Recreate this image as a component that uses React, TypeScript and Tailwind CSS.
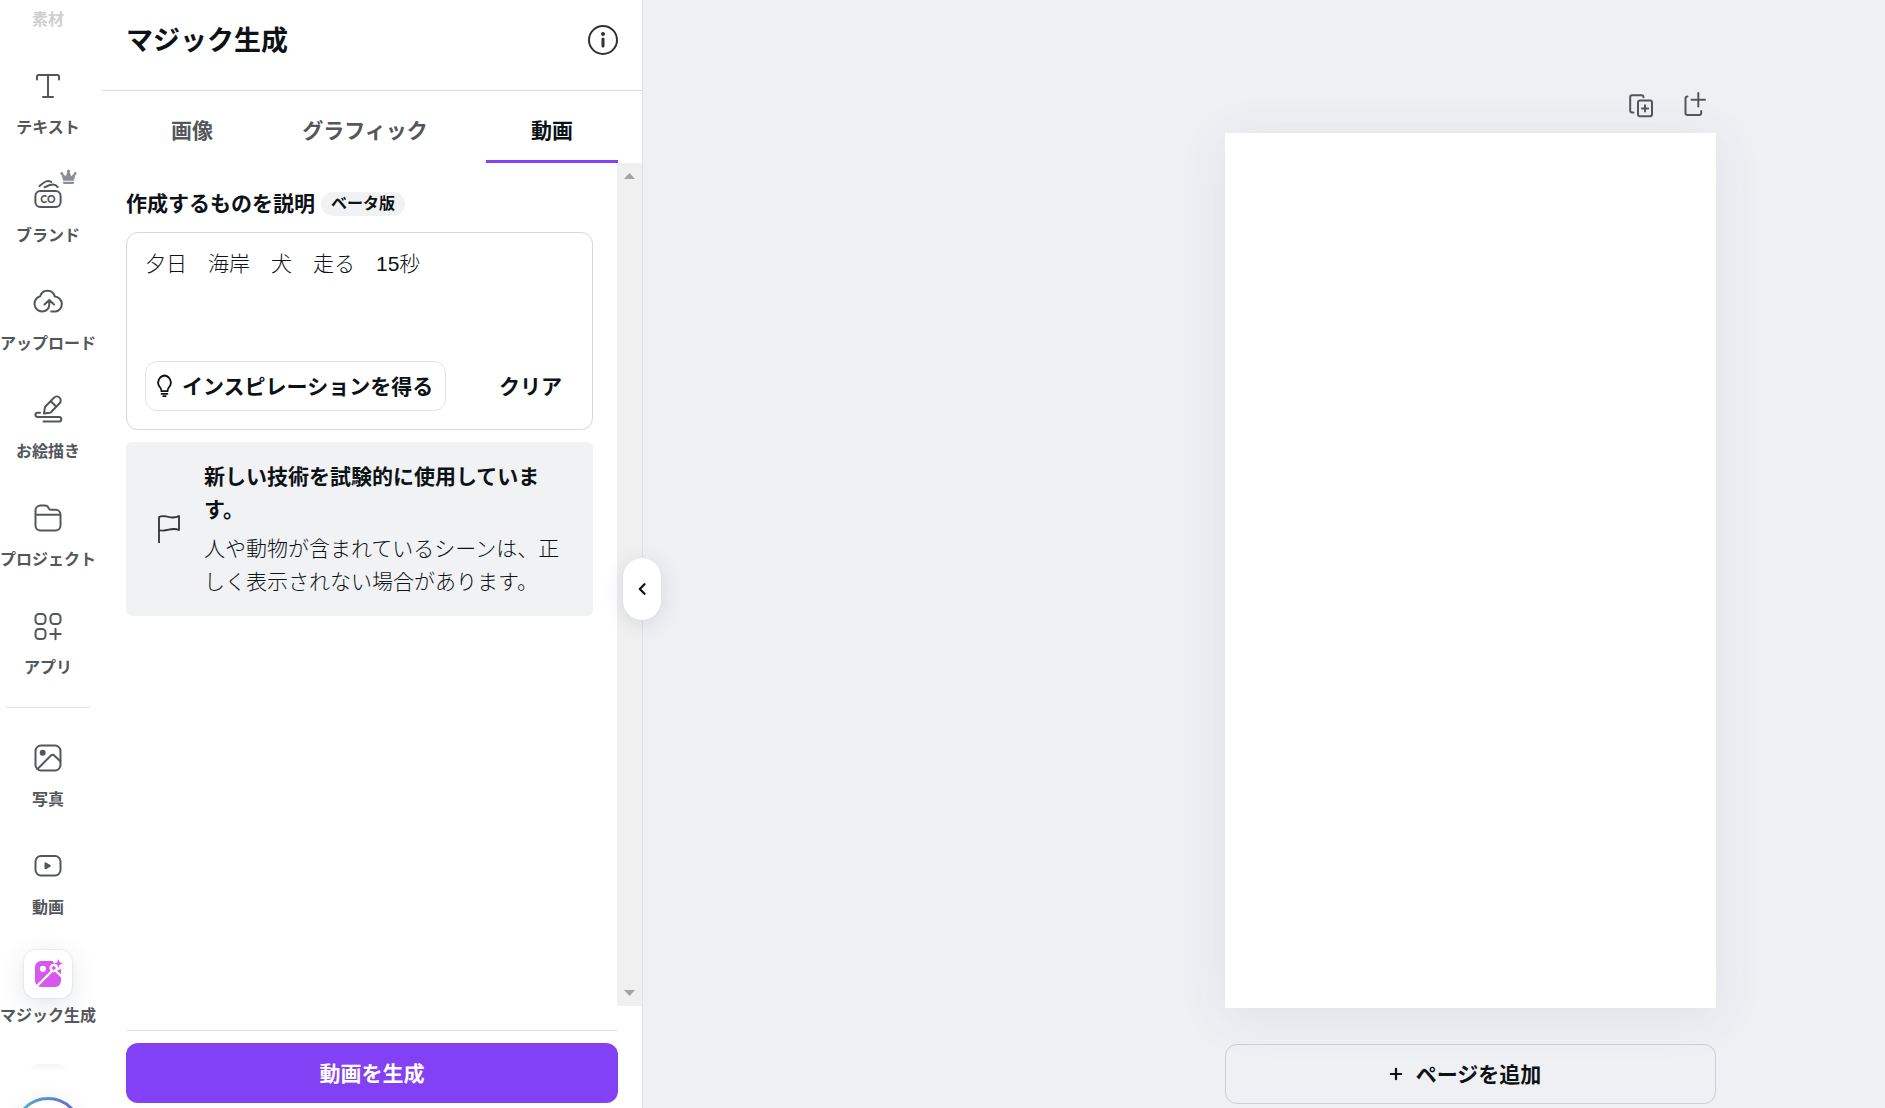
import { useState } from "react";
import type { ReactNode } from "react";

interface NavItem {
  label: string;
  icon: ReactNode;
  premium?: boolean;
  active?: boolean;
}

function Icon({ children }: { children: ReactNode }) {
  return (
    <svg
      className="h-9 w-9"
      viewBox="0 0 36 36"
      fill="none"
      stroke="currentColor"
      strokeWidth="2"
      strokeLinecap="round"
      strokeLinejoin="round"
      aria-hidden="true"
    >
      {children}
    </svg>
  );
}

const mainItems: NavItem[] = [
  {
    label: "テキスト",
    icon: (
      <Icon>
        <path d="M7 11.5V8.500a1.500 1.500 0 0 1 1.500-1.500h19A1.500 1.500 0 0 1 29 8.500v3M18 7v22M13 29h10" />
      </Icon>
    ),
  },
  {
    label: "ブランド",
    premium: true,
    icon: (
      <Icon>
        <rect x="5.400" y="15" width="25.200" height="16" rx="5" />
        <path d="M9.500 10c3-2.600 5.300-4.200 7.500-4.900 1.500-.4 2.800 0 4.200.9M14.500 11.300c3.500-2 6-2.900 8.500-2.900 1.700 0 3.200.8 4.700 2.600" />
        <text x="18" y="26.800" textAnchor="middle" fontSize="10.500" fontWeight="900" fontFamily="Lato, sans-serif" fill="currentColor" stroke="none">CO</text>
      </Icon>
    ),
  },
  {
    label: "アップロード",
    icon: (
      <Icon>
        <path d="M19.300 17v3.500c0 4-3 7-7.300 7a7.800 7.800 0 0 1-1.800-15.300A7.500 7.500 0 0 1 24.700 12.600 7.500 7.500 0 0 1 25.500 27.500h-4.300M14.500 20.500l4.800-4.500 4.800 4.500" />
      </Icon>
    ),
  },
  {
    label: "お絵描き",
    icon: (
      <Icon>
        <path d="M14 21.500l.9-5.900c.1-.5.4-1 .7-1.300L24 5.700a3.900 3.900 0 0 1 5.600 5.500L21.200 20c-.4.400-.8.600-1.300.700zM20.800 9.200l5.500 5.500" />
        <path d="M10 20.700H7.500a2.100 2.100 0 0 0 0 4.200H29a2.200 2.200 0 0 1 0 4.600H13.500" />
      </Icon>
    ),
  },
  {
    label: "プロジェクト",
    icon: (
      <Icon>
        <path d="M5.500 10.500a5 5 0 0 1 5-5h4.500c1.500 0 2.500.6 3.200 1.800l.6 1.100c.6 1 1.300 1.400 2.500 1.400h4.200a5 5 0 0 1 5 5v10.700a5 5 0 0 1-5 5h-15a5 5 0 0 1-5-5zM5.500 14.800h25" />
      </Icon>
    ),
  },
  {
    label: "アプリ",
    icon: (
      <Icon>
        <rect x="5.500" y="6" width="10" height="10" rx="3.500" />
        <rect x="20.500" y="6" width="10" height="10" rx="3.500" />
        <rect x="5.500" y="21" width="10" height="10" rx="3.500" />
        <path d="M25.500 20.800v10.400M20.300 26h10.400" />
      </Icon>
    ),
  },
];

const pinnedItems: NavItem[] = [
  {
    label: "写真",
    icon: (
      <Icon>
        <rect x="5.500" y="5.500" width="25" height="25" rx="5.500" />
        <circle cx="12.700" cy="12.700" r="3" fill="currentColor" stroke="none" />
        <path d="M7.500 29l13.200-13.300c1.300-1.300 2.500-1.300 3.800 0l5.800 5.500" />
      </Icon>
    ),
  },
  {
    label: "動画",
    icon: (
      <Icon>
        <rect x="5.500" y="8" width="25" height="19.500" rx="5.500" />
        <path d="M15.500 15.300v5l4.300-2.500z" fill="currentColor" />
      </Icon>
    ),
  },
  {
    label: "マジック生成",
    active: true,
    icon: (
      <svg className="h-9 w-9" viewBox="0 0 36 36" aria-hidden="true">
        <rect x="5" y="5" width="26" height="26" rx="6" fill="#d857ef" />
        <circle cx="12.900" cy="12.800" r="3.100" fill="#fff" />
        <path d="M6.500 30.500L23 14M24 13l8 8" stroke="#fff" strokeWidth="2.400" fill="none" />
        <path d="M22 3h11v11h-6z" fill="#fff" />
        <circle cx="23.800" cy="12" r="4.300" fill="#fff" />
        <path d="M23.800 9.300l1 1.700 1.800 1-1.800 1-1 1.700-1-1.700-1.800-1 1.800-1z" fill="#d857ef" />
        <path d="M28.500 3l1.200 3.200 3.200 1.300-3.200 1.200-1.200 3.300-1.200-3.300-3.200-1.200 3.200-1.300z" fill="#d857ef" />
        <path d="M31 12.500v5.300l-3.200-3z" fill="#d857ef" />
      </svg>
    ),
  },
];

function CrownIcon() {
  return (
    <svg className="h-4 w-[17px]" viewBox="0 0 17 16" fill="#8b8f95" aria-hidden="true">
      <circle cx="1.700" cy="4.400" r="1.400" />
      <circle cx="8.500" cy="2" r="1.600" />
      <circle cx="15.300" cy="4.400" r="1.400" />
      <path d="M3.200 11.700L1.200 4.600l1.400-.3 3.200 3L7.600 2.500h1.800l1.800 4.800 3.200-3 1.400.3-2 7.100z" />
      <rect x="3" y="12.700" width="11" height="2.200" rx=".8" />
    </svg>
  );
}

function SideNavButton({ item }: { item: NavItem }) {
  return (
    <button className="flex h-[108px] w-24 shrink-0 flex-col items-center gap-[6px] pt-3 text-[#53575c]">
      <span
        className={
          item.active
            ? "relative flex h-12 w-12 items-center justify-center rounded-xl bg-white shadow-[0_0_1px_1px_rgba(64,87,109,0.08),0_6px_24px_rgba(64,79,109,0.15)]"
            : "relative flex h-12 w-12 items-center justify-center"
        }
      >
        {item.icon}
        {item.premium && (
          <span className="absolute -top-px -right-[5px]">
            <CrownIcon />
          </span>
        )}
      </span>
      <span className="relative text-base leading-6 font-semibold whitespace-nowrap">{item.label}</span>
    </button>
  );
}

function SideNav() {
  return (
    <nav className="flex h-full w-[102px] shrink-0 flex-col overflow-hidden bg-white">
      <button className="flex h-[50px] w-24 shrink-0 items-start justify-center pt-2 text-base leading-6 font-semibold text-[#cfd0d2]">
        素材
      </button>
      {mainItems.map((item) => (
        <SideNavButton key={item.label} item={item} />
      ))}
      <div className="h-6 w-24 shrink-0 px-[6px] pt-[9px]">
        <div className="h-px bg-[#dddfe2]" />
      </div>
      {pinnedItems.map((item) => (
        <SideNavButton key={item.label} item={item} />
      ))}
      <div className="mt-[18px] ml-[30px] h-2 w-9 shrink-0 rounded-t-md bg-linear-to-b from-[#f5f5f6] to-white" />
      <button aria-label="アシスタント" className="mt-[25px] ml-[14px] h-[68px] w-[68px] shrink-0 rounded-full shadow-[0_2px_16px_rgba(64,79,109,0.12)]">
        <svg viewBox="0 0 68 68" fill="none" aria-hidden="true">
          <defs>
            <linearGradient id="ring" x1="8" y1="0" x2="60" y2="0" gradientUnits="userSpaceOnUse">
              <stop stopColor="#50b0c8" />
              <stop offset="1" stopColor="#6a67d2" />
            </linearGradient>
          </defs>
          <circle cx="34" cy="34" r="32.500" fill="#fff" stroke="url(#ring)" strokeWidth="3" />
        </svg>
      </button>
    </nav>
  );
}

const tabs = [
  { id: "image", label: "画像", className: "w-[132px]" },
  { id: "graphic", label: "グラフィック", className: "w-[214px]" },
  { id: "video", label: "動画", className: "ml-auto w-[132px]" },
];

function Scrollbar() {
  return (
    <div className="flex w-[25px] shrink-0 flex-col items-center justify-between bg-[#f0f0f0] py-[10px]">
      <svg className="h-[6px] w-[11px]" viewBox="0 0 11 6" fill="#a3a3a3" aria-hidden="true">
        <path d="M0 6L5.500 0 11 6z" />
      </svg>
      <svg className="h-[6px] w-[11px]" viewBox="0 0 11 6" fill="#a3a3a3" aria-hidden="true">
        <path d="M0 0h11L5.500 6z" />
      </svg>
    </div>
  );
}

function GeneratePanel() {
  const [tab, setTab] = useState("video");
  const [prompt, setPrompt] = useState("夕日　海岸　犬　走る　15秒");

  return (
    <section className="relative flex h-full w-[541px] shrink-0 flex-col border-r border-[#dfe1e6] bg-white">
      <header className="flex h-[91px] shrink-0 items-start justify-between border-b border-[#d9dbde] px-6 pt-[23px]">
        <h1 className="text-[27px] leading-9 font-bold">マジック生成</h1>
        <button aria-label="情報" className="mt-[2px] text-[#2f3237]">
          <svg className="h-[30px] w-[30px]" viewBox="0 0 30 30" fill="none" stroke="currentColor" aria-hidden="true">
            <circle cx="15" cy="15" r="14" strokeWidth="2" />
            <circle cx="15" cy="9" r="2" fill="currentColor" stroke="none" />
            <path d="M15 14v7" strokeWidth="3" strokeLinecap="round" />
          </svg>
        </button>
      </header>

      <div role="tablist" className="mx-6 flex h-[72px] shrink-0">
        {tabs.map((t) => (
          <button
            key={t.id}
            role="tab"
            aria-selected={tab === t.id}
            onClick={() => setTab(t.id)}
            className={`${t.className} border-b-[3px] pt-[10px] text-[21px] leading-[33px] font-semibold ${
              tab === t.id ? "border-[#8241f5] text-[#0d1216]" : "border-transparent text-[#53575c]"
            }`}
          >
            {t.label}
          </button>
        ))}
      </div>

      <div className="flex min-h-0 flex-1">
        <div className="min-w-0 flex-1 overflow-hidden pr-6 pl-6">
          <div className="mt-6 flex h-[33px] items-center gap-[6px]">
            <label htmlFor="prompt" className="text-[21px] leading-[33px] font-bold">
              作成するものを説明
            </label>
            <span className="rounded-full bg-[#f1f2f4] px-[10px] text-base leading-6 font-semibold">ベータ版</span>
          </div>

          <div className="mt-3 rounded-xl border border-[#d5d7dc] px-[18px] pt-[14px] pb-[18px]">
            <textarea
              id="prompt"
              value={prompt}
              onChange={(e) => setPrompt(e.target.value)}
              className="block h-[114px] w-full resize-none text-[21px] leading-[33px] font-light outline-none"
            />
            <div className="flex items-center justify-between pr-[6px]">
              <button className="flex h-[50px] items-center gap-[9px] rounded-xl border border-[#e0e2e5] pr-3 pl-[10px] text-[21px] leading-[33px] font-bold">
                <svg
                  className="h-6 w-[17px]"
                  viewBox="0 0 17 24"
                  fill="none"
                  stroke="currentColor"
                  strokeWidth="1.800"
                  strokeLinecap="round"
                  aria-hidden="true"
                >
                  <path d="M5.500 17.200c0-2.200-.5-3.100-1.800-4.300A7.100 7.100 0 0 1 8.500 1.500a7.100 7.100 0 0 1 4.800 11.400c-1.300 1.200-1.800 2.100-1.800 4.300zM5.500 19.800h6M7.300 22.200h2.400" />
                </svg>
                インスピレーションを得る
              </button>
              <button className="px-[6px] text-[21px] leading-[33px] font-bold">クリア</button>
            </div>
          </div>

          <div className="mt-3 flex items-center rounded-md bg-[#f1f2f4] p-[18px]">
            <svg
              className="mr-6 ml-3 h-[30px] w-6 shrink-0"
              viewBox="0 0 24 30"
              fill="none"
              stroke="#2f3237"
              strokeWidth="1.800"
              strokeLinejoin="round"
              aria-hidden="true"
            >
              <path d="M3 29V3c3.500-1.500 6.500-.9 9.800 0 3.500.9 6.500.9 10.200-1v14c-3.700-1.500-6.700-1.200-10.200-.3-3.300.9-6.300 1.300-9.800.3" />
            </svg>
            <div className="text-[21px] leading-[33px]">
              <p className="font-bold">新しい技術を試験的に使用しています。</p>
              <p className="mt-[6px] font-light">人や動物が含まれているシーンは、正しく表示されない場合があります。</p>
            </div>
          </div>
        </div>
        <Scrollbar />
      </div>

      <footer className="mx-6 mt-6 mb-[5px] shrink-0 border-t border-[#dfe1e4] pt-3">
        <button className="h-[60px] w-full rounded-xl bg-[#8241f5] text-[21px] leading-[33px] font-bold text-white">
          動画を生成
        </button>
      </footer>

      <button
        aria-label="パネルを閉じる"
        className="absolute top-[558px] -right-[19px] flex h-[62px] w-[38px] items-center justify-center rounded-full bg-white shadow-[0_0_1px_rgba(64,87,109,0.1),0_4px_20px_rgba(64,79,109,0.15)]"
      >
        <svg className="h-3 w-2" viewBox="0 0 8 12" fill="none" stroke="#0d1216" strokeWidth="2.200" strokeLinecap="round" strokeLinejoin="round" aria-hidden="true">
          <path d="M6.500 1.200L1.800 6l4.700 4.800" />
        </svg>
      </button>
    </section>
  );
}

function Canvas() {
  return (
    <main className="flex h-full min-w-0 flex-1 justify-end bg-[#eff0f4] pt-[88px] pr-[169px] pb-1">
      <div className="flex w-[491px] flex-col">
        <div className="flex h-[45px] shrink-0 justify-end gap-[18px] pr-[2px] text-[#53575c]">
          <button aria-label="ページを複製" className="h-9 w-9">
            <Icon>
              <path d="M9.500 24.500H8a1.800 1.800 0 0 1-1.800-1.800V9A1.800 1.800 0 0 1 8 7.200h9.500a2 2 0 0 1 2 2" />
              <rect x="14" y="12.500" width="14" height="15.700" rx="2" />
              <path d="M21 17.300v6.200M17.900 20.400h6.200" />
            </Icon>
          </button>
          <button aria-label="ページを追加" className="h-9 w-9">
            <Icon>
              <path d="M9.500 8.500A2 2 0 0 0 7.500 10.500V25a2 2 0 0 0 2 2h11.700a2 2 0 0 0 2-2v-2M20.300 5v13.500M13.500 11.700H27" />
            </Icon>
          </button>
        </div>
        <div className="relative flex-1 bg-white shadow-[0_8px_48px_rgba(57,76,96,0.09)]" />
        <button className="mt-9 flex h-[60px] shrink-0 items-center justify-center gap-2 rounded-xl border border-[#cbced7] pr-4 text-[21px] leading-[33px] font-bold">
          <svg className="h-6 w-6" viewBox="0 0 24 24" stroke="currentColor" strokeWidth="2.200" strokeLinecap="round" aria-hidden="true">
            <path d="M12 6.800v10.400M6.800 12h10.400" />
          </svg>
          ページを追加
        </button>
      </div>
    </main>
  );
}

export default function App() {
  return (
    <div className="flex h-screen overflow-hidden font-['Liberation_Sans','Noto_Sans_CJK_JP',sans-serif] text-[#0d1216]" lang="ja">
      <SideNav />
      <GeneratePanel />
      <Canvas />
    </div>
  );
}
